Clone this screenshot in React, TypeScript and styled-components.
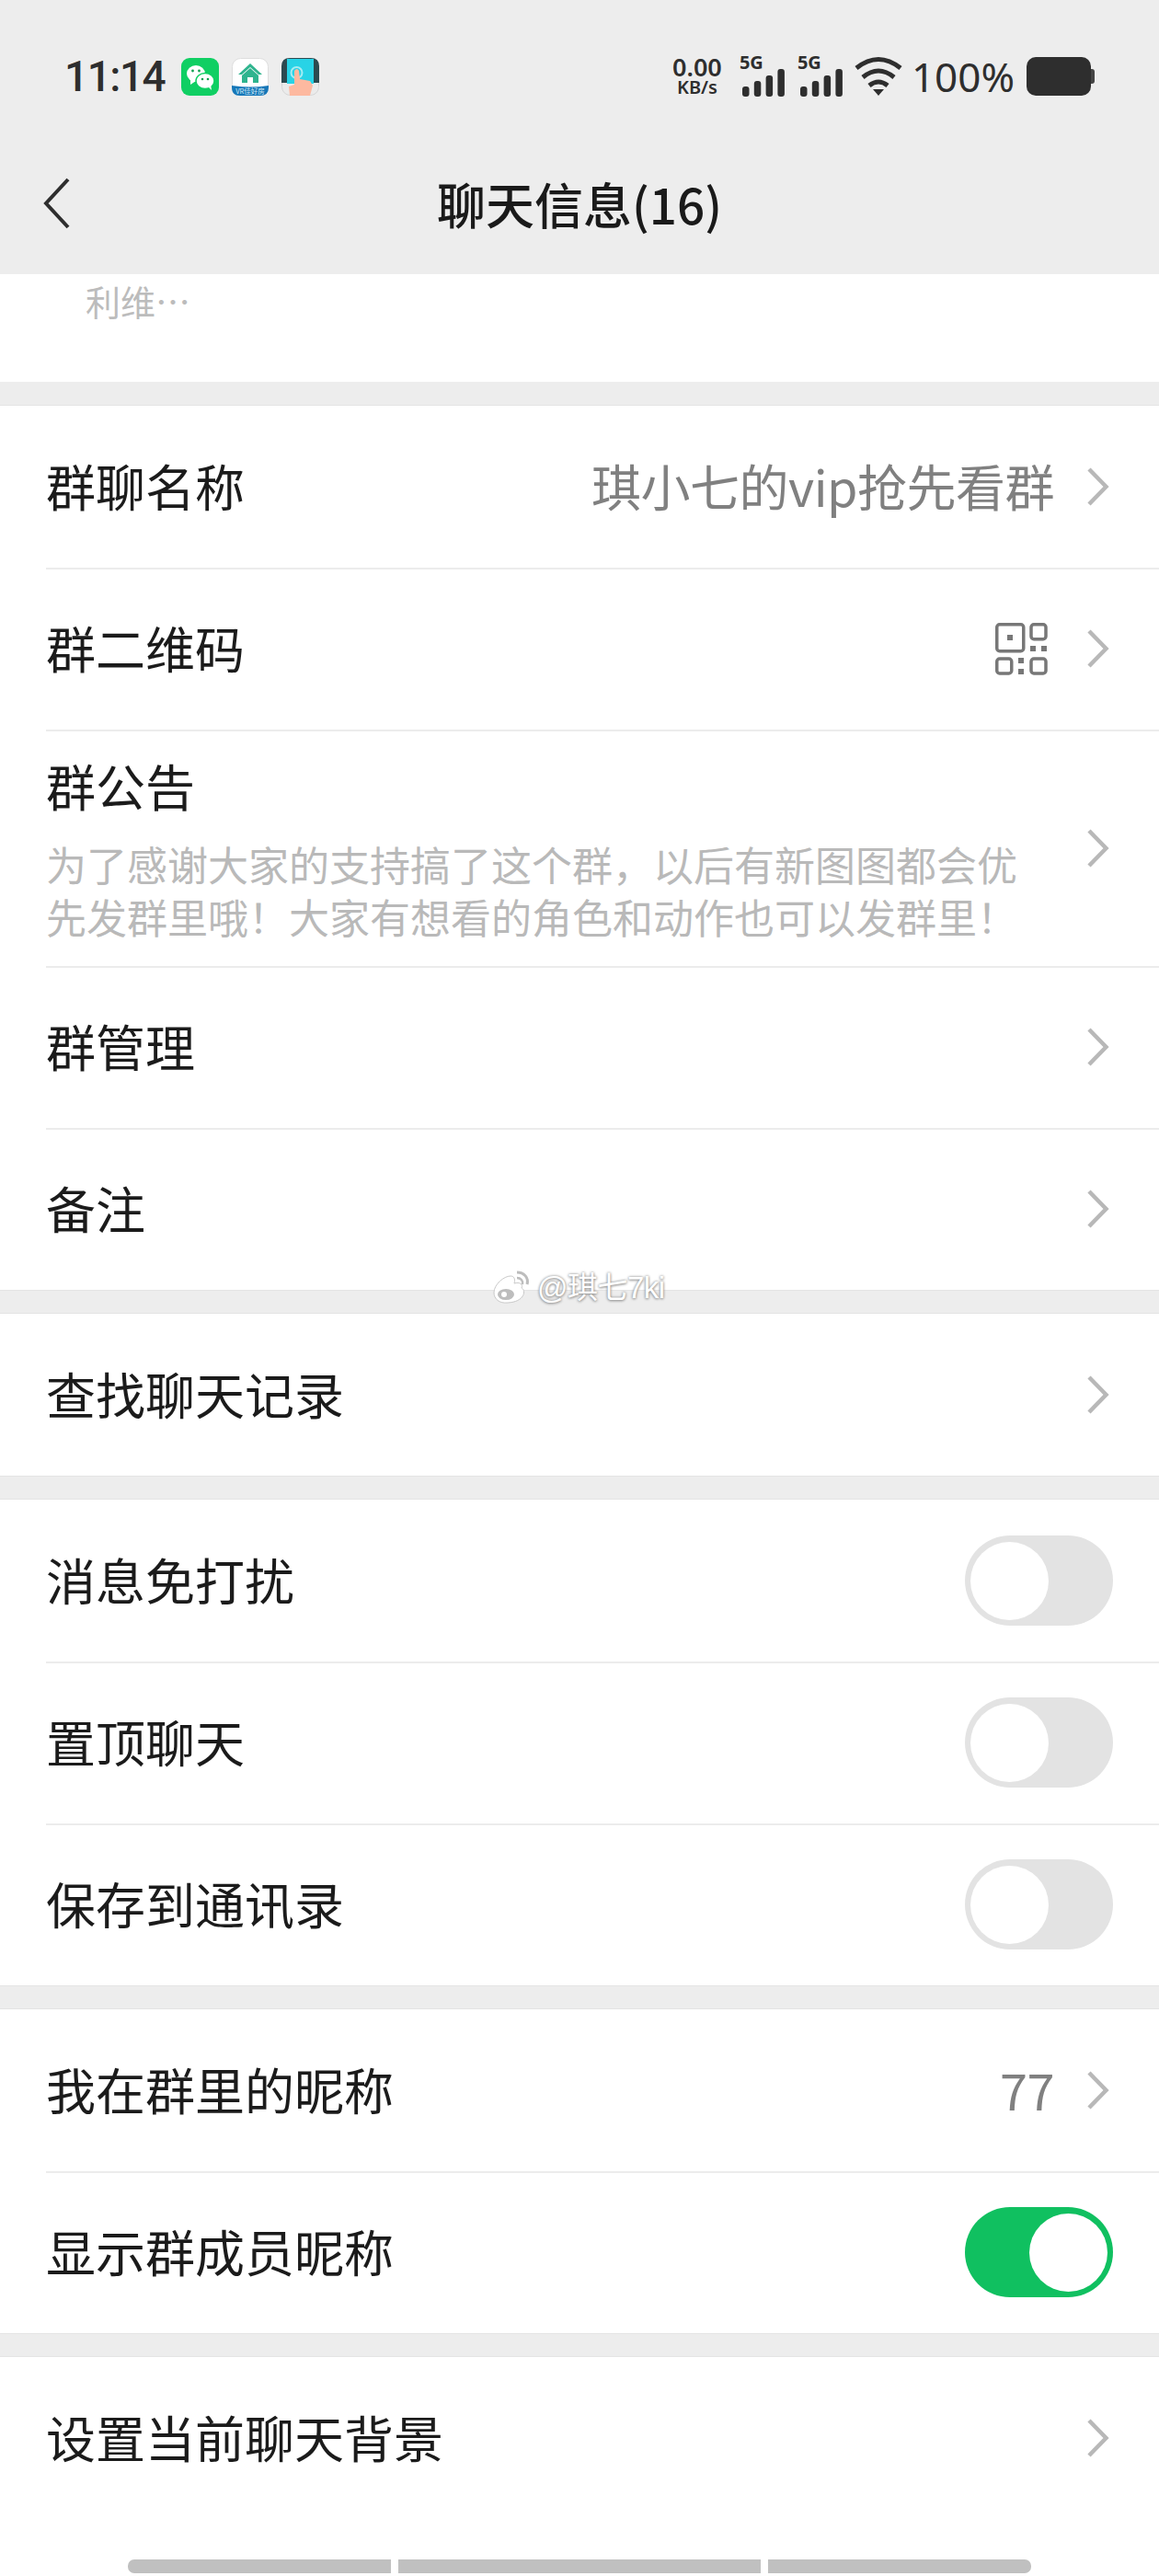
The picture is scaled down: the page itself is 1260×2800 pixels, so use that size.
import React from "react";
import styled, { createGlobalStyle } from "styled-components";

const Global = createGlobalStyle`
  html, body {
    margin: 0;
    padding: 0;
    background: #ffffff;
  }
  * {
    box-sizing: border-box;
  }
`;

const Page = styled.div`
  position: relative;
  width: 1260px;
  height: 2800px;
  overflow: hidden;
  background: #ffffff;
  font-family: "Noto Sans CJK SC", "Noto Sans", sans-serif;
  color: #1b1b1b;
`;

const Header = styled.header`
  height: 298px;
  background: #ededed;
  padding-top: 61px;
`;

const StatusBar = styled.div`
  display: flex;
  align-items: center;
  height: 44px;
  padding: 0 74px 0 70px;
  color: #2e2e2e;
`;

const Clock = styled.div`
  font-family: "Roboto", sans-serif;
  font-size: 46px;
  font-weight: 500;
  letter-spacing: -1.500px;
  width: 127px;
  flex: none;
`;

const AppIcons = styled.div`
  display: flex;
  gap: 14px;
`;

const StatusRight = styled.div`
  display: flex;
  align-items: center;
  margin-left: auto;
`;

const Speed = styled.div`
  display: flex;
  flex-direction: column;
  align-items: center;
  width: 54px;
  margin-right: 21px;
  font-family: "Noto Sans", sans-serif;
  font-weight: 600;
`;

const SpeedValue = styled.span`
  font-size: 27px;
  line-height: 24px;
`;

const SpeedUnit = styled.span`
  font-size: 20px;
  line-height: 20px;
`;

const Signal = styled.div`
  position: relative;
  width: 50px;
  height: 44px;
  margin-right: 10px;
  & + & {
    margin-left: 3px;
  }
`;

const SignalLabel = styled.span`
  position: absolute;
  left: -2px;
  top: -4px;
  font-family: "Noto Sans", sans-serif;
  font-size: 20px;
  line-height: 22px;
  font-weight: 700;
`;

const BarsSvg = styled.svg`
  position: absolute;
  left: 1px;
  bottom: 0;
`;

const Battery = styled.div`
  width: 70px;
  height: 42px;
  margin-left: 13px;
  border-radius: 10px;
  background: #2e2e2e;
  position: relative;
  &::after {
    content: "";
    position: absolute;
    right: -4px;
    top: 13px;
    width: 4px;
    height: 16px;
    border-radius: 0 3px 3px 0;
    background: #454545;
  }
`;

const Percent = styled.div`
  font-family: "Noto Sans", sans-serif;
  font-size: 44px;
  margin-left: 10px;
  line-height: 44px;
`;

const NavBar = styled.div`
  display: grid;
  grid-template-columns: 1fr auto 1fr;
  align-items: center;
  height: 80px;
  margin-top: 76px;
`;

const BackButton = styled.div`
  display: flex;
  padding-left: 47px;
`;

const NavTitle = styled.h1`
  margin: 0;
  font-size: 53px;
  font-weight: 500;
  line-height: 80px;
  color: #1a1a1a;
`;

const TopStrip = styled.div`
  height: 117px;
  padding: 10px 0 0 93px;
  font-size: 38px;
  line-height: 38px;
  color: #bcbcbc;
`;

const Band = styled.div`
  display: flex;
  flex-direction: column;
  gap: 24px;
  padding-top: 25px;
  background: #ededed;
`;

const Section = styled.section`
  background: #ffffff;
  border-top: 1px solid #e4e4e4;
  border-bottom: 1px solid #e4e4e4;
  &:last-of-type {
    border-bottom: none;
  }
`;

const Row = styled.div<{ $tall?: boolean }>`
  display: flex;
  align-items: center;
  height: ${(p) => (p.$tall ? "257px" : "176px")};
  margin-left: 50px;
  padding-right: 50px;
  & + & {
    box-shadow: inset 0 2px 0 #ececec;
  }
`;

const RowBody = styled.div`
  flex: 1;
  min-width: 0;
`;

const Label = styled.div`
  font-size: 54px;
  line-height: 70px;
  margin-top: -3px;
`;

const Note = styled.div`
  font-size: 44px;
  line-height: 57px;
  color: #b9b9b9;
  margin: 22px 0 -4px;
  width: 1070px;
`;

const Value = styled.div`
  font-size: 54px;
  line-height: 70px;
  letter-spacing: -0.500px;
  margin-top: -3px;
  color: #808080;
  margin-right: 32px;
`;

const QrWrap = styled.div`
  display: flex;
  margin-right: 39px;
`;

const Chevron = styled.svg`
  display: block;
  width: 32px;
  height: 44px;
  flex: none;
`;

const Toggle = styled.div<{ $on?: boolean }>`
  display: flex;
  justify-content: ${(p) => (p.$on ? "flex-end" : "flex-start")};
  align-items: center;
  width: 161px;
  height: 98px;
  padding: 0 6px;
  border-radius: 49px;
  background: ${(p) => (p.$on ? "#10c060" : "#e3e3e3")};
`;

const Knob = styled.span`
  width: 85px;
  height: 85px;
  border-radius: 50%;
  background: #ffffff;
`;

const ScrollHint = styled.div`
  display: flex;
  gap: 8px;
  margin: 44px 0 47px 139px;
  width: 982px;
  height: 15px;
`;

const ScrollPiece = styled.span<{ $grow: number }>`
  flex: ${(p) => p.$grow};
  background: #c0c0c0;
  &:first-child {
    border-radius: 7px 0 0 7px;
  }
  &:last-child {
    border-radius: 0 7px 7px 0;
  }
`;

const Watermark = styled.div`
  position: absolute;
  left: 534px;
  top: 1380px;
  display: flex;
  align-items: center;
  gap: 6px;
  line-height: 40px;
  color: #ffffff;
  text-shadow: 0 0 3px #8c8c8c, 0 1px 3px #9a9a9a;
`;

const WatermarkName = styled.span`
  font-family: "Liberation Sans", "Noto Sans CJK SC", sans-serif;
  font-size: 33px;
  letter-spacing: -0.500px;
`;

const ChevronRight = () => (
  <Chevron viewBox="0 0 32 44" fill="none">
    <path d="M6 3 L24.500 22 L6 41" stroke="#b8b8b8" strokeWidth="4.500" />
  </Chevron>
);

const WeChatIcon = () => (
  <svg width="41" height="41" viewBox="0 0 41 41">
    <rect width="41" height="41" rx="9" fill="#10cf63" />
    <ellipse cx="16" cy="17" rx="10" ry="9" fill="#fff" />
    <path d="M10 23 L10 29 L16 25 Z" fill="#fff" />
    <ellipse cx="26" cy="25" rx="10" ry="8.500" fill="#fff" stroke="#10cf63" strokeWidth="1.500" />
    <path d="M30 32 L33 35 L32 29 Z" fill="#fff" />
    <circle cx="12.500" cy="14" r="1.400" fill="#10a050" />
    <circle cx="19.500" cy="14" r="1.400" fill="#10a050" />
    <circle cx="23" cy="23" r="1.300" fill="#10a050" />
    <circle cx="29" cy="23" r="1.300" fill="#10a050" />
  </svg>
);

const HouseIcon = () => (
  <svg width="40" height="41" viewBox="0 0 40 41">
    <rect x="0.500" y="0.500" width="39" height="40" rx="9" fill="#fff" stroke="#dedede" />
    <path d="M7 18 L20 6 L33 18 L29 18 L20 10 L11 18 Z" fill="#2fb48e" />
    <path d="M11 19 L20 11 L29 19 L29 27 L23 27 L23 21 L17 21 L17 27 L11 27 Z" fill="#2fb48e" />
    <path d="M0 30 Q20 33 40 30 L40 32 Q40 41 31 41 L9 41 Q0 41 0 32 Z" fill="#1677b8" />
    <text x="20" y="38.500" textAnchor="middle" fontSize="7.500" fill="#cfe9f5" fontFamily="Noto Sans CJK SC, sans-serif">
      VR佳好房
    </text>
  </svg>
);

const TouchIcon = () => (
  <svg width="41" height="41" viewBox="0 0 41 41">
    <rect x="0.500" y="0.500" width="40" height="40" rx="9" fill="#ebebeb" stroke="#d6d6d6" />
    <path d="M0 27 L0 9 Q0 0 9 0 L32 0 Q41 0 41 9 L41 27 Z" fill="#2c4a50" />
    <rect x="6" y="1" width="29" height="27" fill="#28d3e6" />
    <circle cx="16.500" cy="16" r="6" fill="none" stroke="#a5ecf3" strokeWidth="2" />
    <path d="M14 14 Q17 10 19 14 L20 23 L31 25 L34 30 L31 41 L9 41 L8 31 L14 29 Z" fill="#fdb9a0" />
  </svg>
);

const SignalBars = () => (
  <BarsSvg width="46" height="30" viewBox="0 0 46 30">
    <rect x="0" y="19" width="7.500" height="11" rx="3" fill="#2e2e2e" />
    <rect x="12.800" y="13" width="7.500" height="17" rx="3" fill="#2e2e2e" />
    <rect x="25.600" y="7" width="7.500" height="23" rx="3" fill="#2e2e2e" />
    <rect x="38.400" y="0" width="7.500" height="30" rx="3" fill="#2e2e2e" />
  </BarsSvg>
);

const WifiIcon = () => (
  <svg width="52" height="44" viewBox="0 0 52 44" fill="none">
    <path d="M2 13 Q26 -6 50 13" stroke="#2e2e2e" strokeWidth="5" />
    <path d="M9 23 Q26 9 43 23" stroke="#2e2e2e" strokeWidth="5" />
    <path d="M16 32 Q26 24 36 32" stroke="#2e2e2e" strokeWidth="5" />
    <path d="M20 36 L32 36 L26 43 Z" fill="#2e2e2e" />
  </svg>
);

const QrIcon = () => (
  <svg width="57" height="57" viewBox="0 0 57 57" fill="none" stroke="#777777" strokeWidth="3.500">
    <rect x="1.750" y="1.750" width="29" height="29" rx="3" />
    <rect x="39" y="1.750" width="16" height="16" rx="3" />
    <rect x="1.750" y="39" width="16" height="16" rx="3" />
    <rect x="39" y="39" width="16" height="16" rx="3" />
    <g fill="#777777" stroke="none">
      <rect x="13" y="13" width="6" height="6" />
      <rect x="38" y="25" width="6" height="6" />
      <rect x="50" y="25" width="6" height="6" />
      <rect x="25" y="38" width="6" height="6" />
      <rect x="25" y="50" width="6" height="6" />
    </g>
  </svg>
);

const WeiboLogo = () => (
  <svg width="44" height="38" viewBox="0 0 44 38" fill="none">
    <path
      d="M3 24 C3 15 14 6 21 6 C26 6 26 11 25 14 C31 12 35 15 33 19 C38 21 37 34 18 35 C9 36 3 31 3 24 Z"
      fill="#ffffff"
      stroke="#c9c9c9"
    />
    <ellipse cx="16" cy="26" rx="10" ry="7" fill="#bdbdbd" stroke="#ffffff" strokeWidth="2" />
    <circle cx="14" cy="26" r="3" fill="#ffffff" />
    <path d="M28 2 C36 2 41 8 39 15" stroke="#bdbdbd" strokeWidth="3" />
    <path d="M28 8 C32 8 35 11 34 15" stroke="#bdbdbd" strokeWidth="2.500" />
  </svg>
);

const BackIcon = () => (
  <svg width="30" height="56" viewBox="0 0 30 56" fill="none">
    <path d="M27 2 L3 28 L27 54" stroke="#2e2e2e" strokeWidth="4" />
  </svg>
);

export default function App() {
  return (
    <Page>
      <Global />
      <Header>
        <StatusBar>
          <Clock>11:14</Clock>
          <AppIcons>
            <WeChatIcon />
            <HouseIcon />
            <TouchIcon />
          </AppIcons>
          <StatusRight>
            <Speed>
              <SpeedValue>0.00</SpeedValue>
              <SpeedUnit>KB/s</SpeedUnit>
            </Speed>
            <Signal>
              <SignalLabel>5G</SignalLabel>
              <SignalBars />
            </Signal>
            <Signal>
              <SignalLabel>5G</SignalLabel>
              <SignalBars />
            </Signal>
            <WifiIcon />
            <Percent>100%</Percent>
            <Battery />
          </StatusRight>
        </StatusBar>
        <NavBar>
          <BackButton>
            <BackIcon />
          </BackButton>
          <NavTitle>聊天信息(16)</NavTitle>
        </NavBar>
      </Header>

      <TopStrip>利维…</TopStrip>

      <Band>
        <Section>
          <Row>
            <RowBody>
              <Label>群聊名称</Label>
            </RowBody>
            <Value>琪小七的vip抢先看群</Value>
            <ChevronRight />
          </Row>
          <Row>
            <RowBody>
              <Label>群二维码</Label>
            </RowBody>
            <QrWrap>
              <QrIcon />
            </QrWrap>
            <ChevronRight />
          </Row>
          <Row $tall>
            <RowBody>
              <Label>群公告</Label>
              <Note>为了感谢大家的支持搞了这个群，以后有新图图都会优先发群里哦！大家有想看的角色和动作也可以发群里！</Note>
            </RowBody>
            <ChevronRight />
          </Row>
          <Row>
            <RowBody>
              <Label>群管理</Label>
            </RowBody>
            <ChevronRight />
          </Row>
          <Row>
            <RowBody>
              <Label>备注</Label>
            </RowBody>
            <ChevronRight />
          </Row>
        </Section>

        <Section>
          <Row>
            <RowBody>
              <Label>查找聊天记录</Label>
            </RowBody>
            <ChevronRight />
          </Row>
        </Section>

        <Section>
          <Row>
            <RowBody>
              <Label>消息免打扰</Label>
            </RowBody>
            <Toggle>
              <Knob />
            </Toggle>
          </Row>
          <Row>
            <RowBody>
              <Label>置顶聊天</Label>
            </RowBody>
            <Toggle>
              <Knob />
            </Toggle>
          </Row>
          <Row>
            <RowBody>
              <Label>保存到通讯录</Label>
            </RowBody>
            <Toggle>
              <Knob />
            </Toggle>
          </Row>
        </Section>

        <Section>
          <Row>
            <RowBody>
              <Label>我在群里的昵称</Label>
            </RowBody>
            <Value>77</Value>
            <ChevronRight />
          </Row>
          <Row>
            <RowBody>
              <Label>显示群成员昵称</Label>
            </RowBody>
            <Toggle $on>
              <Knob />
            </Toggle>
          </Row>
        </Section>

        <Section>
          <Row>
            <RowBody>
              <Label>设置当前聊天背景</Label>
            </RowBody>
            <ChevronRight />
          </Row>
          <ScrollHint>
            <ScrollPiece $grow={286} />
            <ScrollPiece $grow={394} />
            <ScrollPiece $grow={286} />
          </ScrollHint>
        </Section>
      </Band>

      <Watermark>
        <WeiboLogo />
        <WatermarkName>@琪七7ki</WatermarkName>
      </Watermark>
    </Page>
  );
}
